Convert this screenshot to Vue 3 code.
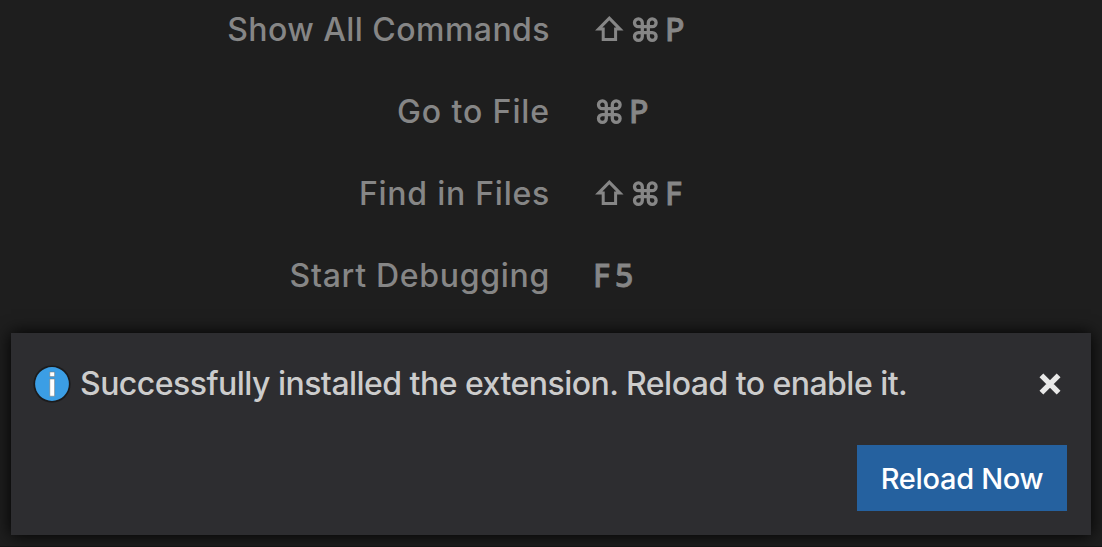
<script setup>
const shortcuts = [
  { label: 'Show All Commands', cls: 'show', keys: ['shift', 'cmd', 'P'] },
  { label: 'Go to File', cls: 'goto', keys: ['cmd', 'P'] },
  { label: 'Find in Files', cls: 'find', keys: ['shift', 'cmd', 'F'] },
  { label: 'Start Debugging', cls: 'debug', keys: ['F', '5'] },
]
</script>

<template>
  <main class="editor">
    <dl class="shortcuts">
      <div v-for="s in shortcuts" :key="s.label" class="row">
        <dt><span :class="s.cls">{{ s.label }}</span></dt>
        <dd>
          <template v-for="k in s.keys" :key="k">
            <svg v-if="k === 'shift'" class="glyph shift" width="36" height="30" viewBox="-2 0 36 30">
              <path d="M14.3 3.1 L25 14.1 H20.6 V24.6 H8.2 V14.1 H3.6 Z" />
            </svg>
            <svg v-else-if="k === 'cmd'" class="glyph cmd" width="36" height="30" viewBox="-2 0 36 30">
              <path d="M11.3 11.7 V7.9 A3.9 3.9 0 1 0 7.4 11.7 H21.2 A3.9 3.9 0 1 0 17.3 7.9 V21.5 A3.9 3.9 0 1 0 21.2 17.6 H7.4 A3.9 3.9 0 1 0 11.3 21.5 Z" />
            </svg>
            <kbd v-else>{{ k }}</kbd>
          </template>
        </dd>
      </div>
    </dl>
    <section class="toast">
      <div class="message">
        <svg class="info" width="38" height="38" viewBox="0 0 38 38">
          <circle cx="19" cy="19" r="18.6" fill="#1b1b1c" />
          <circle cx="19" cy="19" r="16.9" fill="#3b9ee5" />
          <path d="M16.8 7h4.8v4.6h-4.8z M16.8 14h4.8v17.2h-4.8z" fill="#fff" stroke="#77726b" stroke-width=".5" />
        </svg>
        <p>Successfully installed the extension. Reload to enable it.</p>
        <svg class="close" width="22" height="22" viewBox="0 0 22 22">
          <path d="M2.4 2.4 L19.6 19.6 M19.6 2.4 L2.4 19.6" />
        </svg>
      </div>
      <button><span>Reload Now</span></button>
    </section>
  </main>
</template>

<style>
body { margin: 0; background: #1e1e1e; }
</style>

<style scoped>
.editor {
  box-sizing: border-box;
  width: 1102px;
  height: 547px;
  overflow: hidden;
  background: #1e1e1e;
  border-bottom: 1px solid #141414;
  font-family: Inter, "Liberation Sans", sans-serif;
  display: flex;
  flex-direction: column;
}
.shortcuts { margin: 0; height: 333px; flex: none; }
.row { display: flex; height: 60px; margin-bottom: 22px; align-items: center; }
dt {
  box-sizing: border-box;
  width: 550px;
  padding-top: 1px;
  text-align: right;
  color: #868686;
  font-size: 32px;
  font-weight: 500;
  line-height: 58px;
  height: 60px;
  white-space: nowrap;
}
.show { letter-spacing: 0.45px; }
.goto { letter-spacing: 0.9px; }
.find { letter-spacing: 0.75px; }
.debug { letter-spacing: 0.7px; }
dd { margin: 0 0 0 43px; display: flex; align-items: center; color: #868686; }
.glyph { fill: none; stroke: #868686; stroke-width: 3; flex: none; }
.glyph.cmd { stroke-width: 3.3; }
kbd {
  font: 500 32px/58px "Noto Sans", "Open Sans", sans-serif;
  -webkit-text-stroke: 0.8px #868686;
  height: 60px;
  width: 22px;
}
.toast {
  box-sizing: border-box;
  flex: none;
  width: 1080px;
  height: 202px;
  margin-left: 11px;
  padding: 32px 24px 24px 22px;
  background: #2d2d30;
  box-shadow: 0 0 16px #000;
  display: flex;
  flex-direction: column;
  justify-content: space-between;
  align-items: flex-end;
}
.message { display: flex; align-items: center; width: 100%; height: 38px; }
.info { flex: none; }
p {
  margin: 0 0 0 9px;
  color: #cccccc;
  font-size: 32px;
  font-weight: 450;
  letter-spacing: -0.53px;
  line-height: 38px;
  white-space: nowrap;
}
.close { margin-left: auto; margin-right: 6px; flex: none; fill: none; stroke: #e8e8e8; stroke-width: 5.4; }
button {
  width: 210px;
  height: 66px;
  padding: 2px 0 0;
  border: 0;
  background: #25619f;
  color: #fff;
  font: 500 29px/64px Inter, "Liberation Sans", sans-serif;
  letter-spacing: -0.3px;
  white-space: nowrap;
}
</style>
